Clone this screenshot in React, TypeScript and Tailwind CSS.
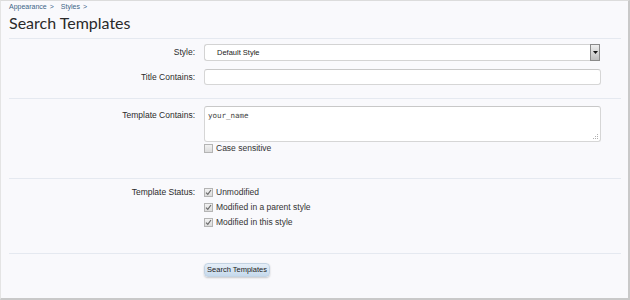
import React from "react";

const sans = { fontFamily: "'Liberation Sans', Arial, sans-serif" };

function Check({ checked = false }: { checked?: boolean }) {
  return (
    <span className="flex h-[9px] w-[9px] items-center justify-center border border-[#b4b4b4] bg-gradient-to-b from-[#f2f2f2] to-[#dcdcdc]">
      {checked && (
        <svg width="7" height="7" viewBox="0 0 7 7">
          <path d="M1 3.6 L2.8 5.4 L6 1" fill="none" stroke="#6a6a6a" strokeWidth="1.2" />
        </svg>
      )}
    </span>
  );
}

function CheckRow({ label, checked }: { label: string; checked?: boolean }) {
  return (
    <label className="flex h-[15px] items-center gap-[3px] text-[8.5px] text-[#333]">
      <Check checked={checked} />
      <span>{label}</span>
    </label>
  );
}

function Label({ children, className = "" }: { children: React.ReactNode; className?: string }) {
  return (
    <div className={"w-[186px] shrink-0 text-right text-[8.5px] text-[#2b2b2b] " + className}>{children}</div>
  );
}

export default function App() {
  return (
    <div
      className="h-[300px] w-[630px] overflow-hidden border-l border-t border-l-[#e4e4e4] border-t-[#dcdcdc] border-r-2 border-b-2 border-r-[#c9c9c9] border-b-[#c9c9c9] bg-[#f9f9fc] pl-[8px] pr-[7px]"
      style={sans}
    >
      <div className="flex h-[13px] items-center text-[7px] text-[#3d6587]">
        <span>Appearance</span>
        <span className="ml-[3px]">&gt;</span>
        <span className="ml-[7px]">Styles</span>
        <span className="ml-[3px]">&gt;</span>
      </div>
      <h1
        className="mb-[6px] h-[18px] text-[16px] leading-[18px] text-[#2a2a2a]"
        style={{ fontFamily: "Lato, 'Liberation Sans', sans-serif" }}
      >
        Search Templates
      </h1>

      <div className="border-t border-[#e5e9f0] pt-[5px] pb-[13px]">
        <div className="flex h-[17px] items-center">
          <Label>Style:</Label>
          <div className="ml-[9px] flex h-[17px] w-[396px] items-center justify-between rounded-l-[3px] border border-r-0 border-[#d3d3d3] bg-white">
            <span className="pl-[12px] text-[7.5px] text-[#222]">Default Style</span>
            <span className="flex h-[17px] w-[10px] items-center justify-center border border-[#8a8a8a] bg-gradient-to-b from-[#f0f0f0] to-[#bdbdbd]">
              <svg width="5" height="3" viewBox="0 0 5 3">
                <path d="M0 0 H5 L2.5 3 Z" fill="#111" />
              </svg>
            </span>
          </div>
        </div>
        <div className="mt-[8px] flex h-[16px] items-center">
          <Label>Title Contains:</Label>
          <input
            readOnly
            className="ml-[9px] h-[16px] w-[397px] rounded-[3px] border border-[#d6d6d6] border-t-[#c8c8c8] bg-white outline-none"
          />
        </div>
      </div>

      <div className="border-t border-[#e5e9f0] pt-[7px] pb-[24px]">
        <div className="flex">
          <Label className="pt-[3px] leading-[12px]">Template Contains:</Label>
          <div className="ml-[9px] w-[397px]">
            <div className="relative h-[36px] w-[397px] rounded-[3px] border border-[#d6d6d6] border-t-[#c8c8c8] bg-white px-[3px] pt-[1px] leading-[10px]">
              <span
                className="text-[7.5px] text-[#444]"
                style={{ fontFamily: "'DejaVu Sans Mono', 'Liberation Mono', monospace" }}
              >
                your_name
              </span>
              <svg className="absolute bottom-[1px] right-[1px]" width="6" height="6" viewBox="0 0 6 6">
                <rect x="4" y="0" width="1" height="1" fill="#b0b0b0" />
                <rect x="2" y="2" width="1" height="1" fill="#b0b0b0" />
                <rect x="4" y="2" width="1" height="1" fill="#b0b0b0" />
                <rect x="0" y="4" width="1" height="1" fill="#b0b0b0" />
                <rect x="2" y="4" width="1" height="1" fill="#b0b0b0" />
                <rect x="4" y="4" width="1" height="1" fill="#b0b0b0" />
              </svg>
            </div>
            <div className="flex h-[12px] items-center">
              <CheckRow label="Case sensitive" />
            </div>
          </div>
        </div>
      </div>

      <div className="border-t border-[#e5e9f0] pt-[6px] pb-[23px]">
        <div className="flex">
          <Label className="h-[15px] leading-[15px]">Template Status:</Label>
          <div className="ml-[9px] flex flex-col">
            <CheckRow label="Unmodified" checked />
            <CheckRow label="Modified in a parent style" checked />
            <CheckRow label="Modified in this style" checked />
          </div>
        </div>
      </div>

      <div className="border-t border-[#e5e9f0] pt-[9px]">
        <div className="flex">
          <div className="w-[186px] shrink-0" />
          <button className="ml-[9px] h-[14px] w-[66px] rounded-[4px] border border-[#c3d3e3] bg-gradient-to-b from-[#e6eff8] to-[#c5d9ec] text-[7.5px] text-[#222] shadow-[0_1px_2px_rgba(0,0,0,0.2)]">
            Search Templates
          </button>
        </div>
      </div>
    </div>
  );
}
